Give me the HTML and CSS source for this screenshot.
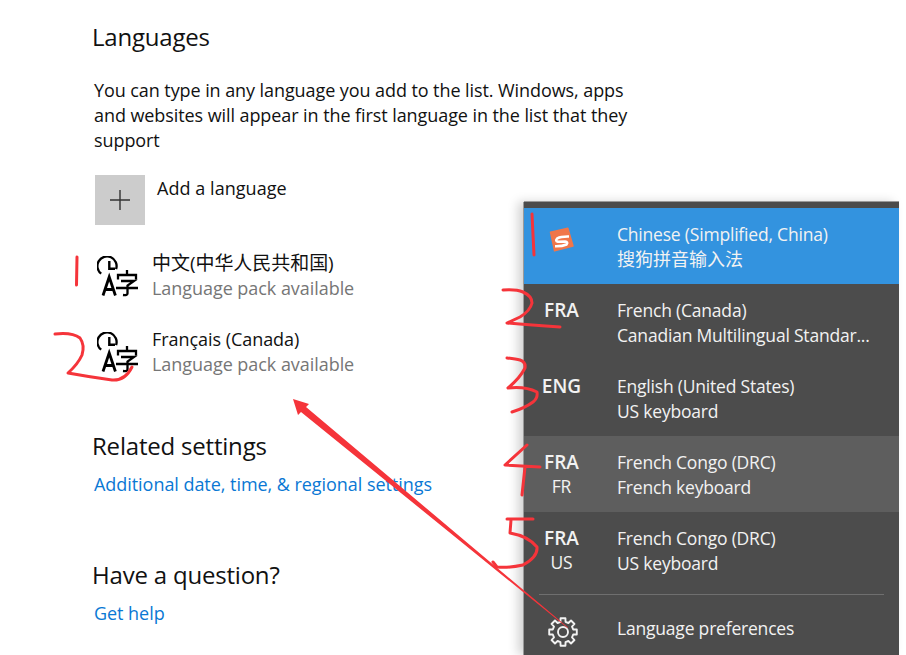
FILE: index.html
```html
<!DOCTYPE html>
<html lang="en">
<head>
<meta charset="UTF-8">
<title>Languages</title>
<link rel="stylesheet" href="styles.css">
</head>
<body>
<div id="wrap">
    <main id="settings">
        <h2 class="head">Languages</h2>
        <p class="intro">You can type in any language you add to the list. Windows, apps and websites will appear in the first language in the list that they support</p>
        <div class="add">
            <span class="add-box">
                <svg width="20" height="20" viewBox="0 0 20 20"><path d="M10 0V20M0 10H20" stroke="#333" stroke-width="1.4"/></svg>
            </span>
            <span class="add-text">Add a language</span>
        </div>
        <div class="lang">
            <svg class="lang-icon" width="41" height="41" viewBox="0 0 41 41"><use href="#lang-pack"/></svg>
            <div class="lang-text">
                <div class="cjk">中文(中华人民共和国)</div>
                <div class="sub">Language pack available</div>
            </div>
        </div>
        <div class="lang">
            <svg class="lang-icon" width="41" height="41" viewBox="0 0 41 41"><use href="#lang-pack"/></svg>
            <div class="lang-text">
                <div>Français (Canada)</div>
                <div class="sub">Language pack available</div>
            </div>
        </div>
        <h2 class="head related">Related settings</h2>
        <a class="link">Additional date, time, &amp; regional settings</a>
        <h2 class="head question">Have a question?</h2>
        <a class="link">Get help</a>
    </main>

    <aside id="flyout">
        <div class="row current">
            <div class="badge">
                <svg class="sogou" width="26" height="26" viewBox="0 0 26 26">
                    <path d="M1.500 6.200 18.800 2.200 24 20 5.500 24.700Z" fill="#f0764a" stroke="#f0764a" stroke-width="1.500" stroke-linejoin="round"/>
                    <path d="M20 10.500Q12 10.300 8.300 12.300Q5.800 14.800 9 15.700L16 15.500Q19.500 16 17.500 18.500Q13 20.500 6 20.300" fill="none" stroke="#fff" stroke-width="2.600"/>
                </svg>
            </div>
            <div class="row-text">
                <div>Chinese (Simplified, China)</div>
                <div class="ime">搜狗拼音输入法</div>
            </div>
        </div>
        <div class="row">
            <div class="badge"><b>FRA</b></div>
            <div class="row-text">
                <div>French (Canada)</div>
                <div>Canadian Multilingual Standar...</div>
            </div>
        </div>
        <div class="row">
            <div class="badge"><b>ENG</b></div>
            <div class="row-text">
                <div>English (United States)</div>
                <div>US keyboard</div>
            </div>
        </div>
        <div class="row hover">
            <div class="badge"><b>FRA</b><span>FR</span></div>
            <div class="row-text">
                <div>French Congo (DRC)</div>
                <div>French keyboard</div>
            </div>
        </div>
        <div class="row">
            <div class="badge"><b>FRA</b><span>US</span></div>
            <div class="row-text">
                <div>French Congo (DRC)</div>
                <div>US keyboard</div>
            </div>
        </div>
        <div class="prefs">
            <div class="badge">
                <svg class="gear" width="30" height="30" viewBox="-15 -15 30 30" fill="none" stroke="#f2f2f2" stroke-width="1.900" stroke-linejoin="round">
                    <circle r="5"/>
                    <path d="M-2.540 -10.190-2.430 -13.790H2.430L2.540 -10.190 5.410 -9 8.030 -11.470 11.470 -8.030 9 -5.410 10.190 -2.540 13.790 -2.430V2.430L10.190 2.540 9 5.410 11.470 8.030 8.030 11.470 5.410 9 2.540 10.190 2.430 13.790H-2.430L-2.540 10.190-5.410 9-8.030 11.470-11.470 8.030-9 5.410-10.190 2.540-13.790 2.430V-2.430L-10.190 -2.540-9 -5.410-11.470 -8.030-8.030 -11.470-5.410 -9Z"/>
                </svg>
            </div>
            <div class="row-text">Language preferences</div>
        </div>
    </aside>

    <!-- red marks drawn on top of the screenshot -->
    <svg id="marks" width="906" height="655" viewBox="0 0 906 655" fill="none" stroke="#f5343a" stroke-width="3" stroke-linecap="round" stroke-linejoin="round">
        <path d="M77 257 76.500 285"/>
        <path d="M55 334Q72 332 80 338 85 345 82 355 78 364 68 373 90 377 112 380 125 381 132 367"/>
        <path d="M532 214 533 235 534 255"/>
        <path d="M503 290Q516 289 523 292 532 296 532 303 530 311 520 317L507 323Q530 325 560 327"/>
        <path d="M507 358Q516 359 520 360 526 362 525 368 520 378 508 388 525 386 537 392 538 398 533 402 525 408 512 412"/>
        <path d="M527 445 505 465 540 467M525 467 522 495"/>
        <path d="M507 519 533 519M511 520 510 533Q528 536 537 547 538 557 523 565 510 568 497 567L493 562"/>
        <polygon points="293,399 309,404 306,407 568,627.500 567.500,628 301,412 298,415" fill="#f5343a" stroke="none"/>
    </svg>
</div>

<svg width="0" height="0" class="defs">
    <symbol id="lang-pack" viewBox="0 0 41 41">
        <path d="M4.200 17.700A9.600 9.600 0 1 1 19.100 13.100" fill="none" stroke="#000" stroke-width="2.300"/>
        <path d="M12.300 5V12.700H18" fill="none" stroke="#000" stroke-width="2.400"/>
        <path d="M6 39.500 12.200 21 18.400 39.500M8 33.500H16.500" fill="none" stroke="#000" stroke-width="2.800"/>
        <path d="M30 14V18M21 23.500V19H39V23.500M24 25H37L30.500 29.500V37.500Q30.500 39.500 26 39M19 32H41" fill="none" stroke="#000" stroke-width="2.300"/>
    </symbol>
</svg>
</body>
</html>
```
FILE: styles.css
```css
html, body {
    margin: 0;
    height: 100%;
    overflow: hidden;
    background: #fff;
}
#wrap {
    position: relative;
    width: 906px;
    height: 655px;
    overflow: hidden;
    font-family: "Open Sans", "Noto Sans CJK SC", sans-serif;
    color: #111;
}
.defs {
    position: absolute;
}
#settings {
    display: flex;
    flex-direction: column;
    align-items: flex-start;
    padding: 21px 0 0 92px;
    width: 540px;
}
.head {
    margin: 0;
    font-size: 24px;
    line-height: 32px;
    font-weight: 400;
    letter-spacing: -.2px;
}
.intro {
    margin: 25px 0 0 2px;
    font-size: 18px;
    line-height: 25px;
    letter-spacing: -.08px;
}
.add {
    display: flex;
    margin: 22px 0 0 3px;
    gap: 12px;
}
.add-box {
    display: flex;
    align-items: center;
    justify-content: center;
    width: 50px;
    height: 50px;
    background: #ccc;
}
.add-text {
    font-size: 18px;
    line-height: 26px;
    letter-spacing: .05px;
}
.lang {
    display: flex;
    gap: 14px;
    margin: 0 0 0 5px;
    height: 76px;
    align-items: center;
}
.add + .lang {
    margin-top: 13px;
}
.lang-text {
    font-size: 18px;
    line-height: 25px;
    letter-spacing: -.05px;
}
.cjk {
    font-size: 19px;
}
.sub {
    color: #767676;
}
.related {
    margin-top: 40px;
}
.question {
    margin-top: 62px;
}
.link {
    margin: 10px 0 0 2px;
    font-size: 18px;
    line-height: 25px;
    letter-spacing: -.05px;
    color: #0a78d4;
}
#flyout {
    position: absolute;
    left: 524px;
    top: 202px;
    width: 375px;
    height: 453px;
    padding-top: 6px;
    box-sizing: border-box;
    background: #4c4c4c;
    color: #f2f2f2;
    font-size: 17.5px;
    letter-spacing: -.2px;
    box-shadow: -1px 0 0 #9a9a9a, 0 -1px 0 #9a9a9a, -6px 0 10px rgba(0, 0, 0, .18);
}
.row {
    display: flex;
    align-items: flex-start;
    height: 76px;
    padding-top: 14px;
    box-sizing: border-box;
}
.current {
    background: #3393df;
}
.hover {
    background: #5e5e5e;
}
.badge {
    display: flex;
    flex-direction: column;
    align-items: center;
    flex: none;
    width: 75px;
    line-height: 25px;
    margin-right: 18px;
}
.badge b {
    font-size: 19px;
    font-weight: 600;
    letter-spacing: 0;
}
.badge span {
    margin-top: -1px;
}
.sogou {
    margin-top: 4px;
}
.row-text {
    line-height: 25px;
    white-space: nowrap;
}
.ime {
    font-size: 18px;
    letter-spacing: 0;
}
.prefs {
    display: flex;
    align-items: center;
    height: 80px;
    position: relative;
}
.prefs::before {
    content: "";
    position: absolute;
    left: 15px;
    right: 15px;
    top: 6px;
    border-top: 1px solid #6f6f6f;
}
.gear {
    margin: 7px 0 0 2px;
}
#marks {
    position: absolute;
    left: 0;
    top: 0;
}
```
